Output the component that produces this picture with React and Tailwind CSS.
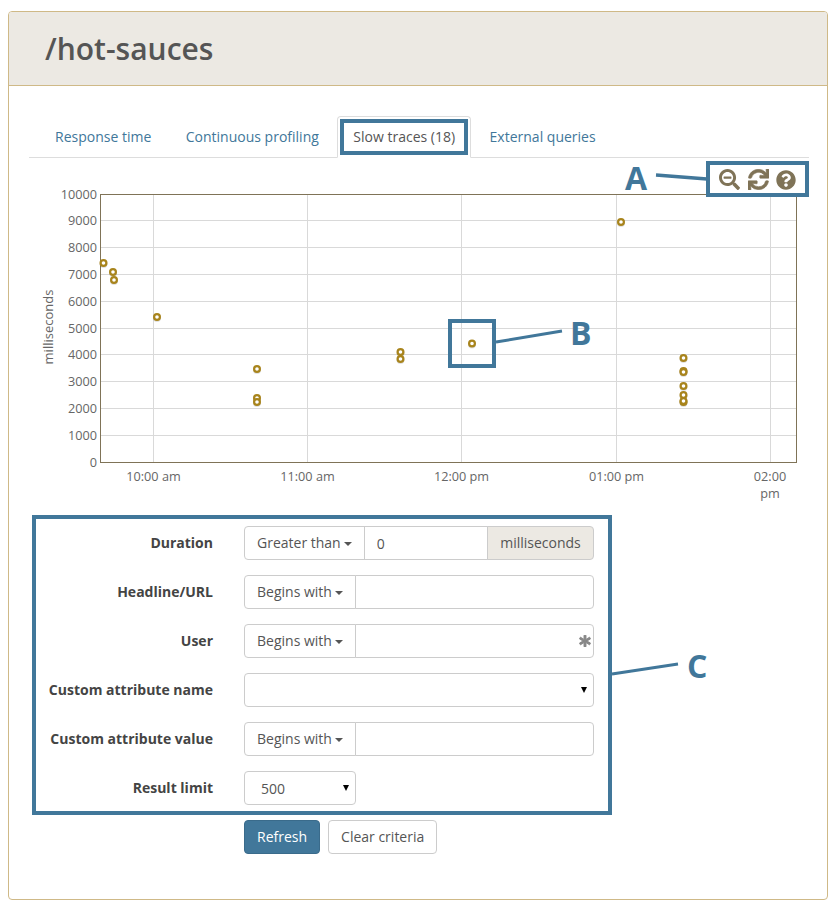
import React from "react";
import { FaSearchMinus, FaSync, FaQuestionCircle, FaAsterisk } from "react-icons/fa";

const yTicks = [10000, 9000, 8000, 7000, 6000, 5000, 4000, 3000, 2000, 1000, 0];
const xTicks = [
  { x: 153.5, label: "10:00 am" },
  { x: 307.5, label: "11:00 am" },
  { x: 461.5, label: "12:00 pm" },
  { x: 616.5, label: "01:00 pm" },
];
const points = [
  [103.5, 263], [113, 272], [114, 280], [157, 317], [257, 369], [257, 398], [257, 402],
  [400.5, 352], [400.5, 359], [472, 343.5], [621, 222], [683.5, 358], [683.5, 371],
  [683.5, 372], [683.5, 386], [683.5, 395], [683.5, 402], [683.5, 401],
];

function Chart() {
  return (
    <svg width="780" height="352" viewBox="29 158 780 352" className="block">
      {yTicks.map((tick) => {
        const y = Math.floor(462 - tick * 0.0268) + 0.5;
        return (
          <g key={tick}>
            <line x1="101" x2="797" y1={y} y2={y} stroke="#d9d9d9" />
            <text x="97" y={y + 4.5} textAnchor="end" fontSize="12.7" fill="#666">{tick}</text>
          </g>
        );
      })}
      {xTicks.map((tick) => (
        <g key={tick.label}>
          <line x1={tick.x} x2={tick.x} y1="194" y2="462" stroke="#d9d9d9" />
          <text x={tick.x} y="481" textAnchor="middle" fontSize="12.7" fill="#666">{tick.label}</text>
        </g>
      ))}
      <line x1="770.5" x2="770.5" y1="194" y2="462" stroke="#d9d9d9" />
      <text x="770" y="481" textAnchor="middle" fontSize="12.7" fill="#666">02:00</text>
      <text x="770" y="498" textAnchor="middle" fontSize="12.7" fill="#666">pm</text>
      <rect x="100.5" y="194.5" width="696" height="268" fill="none" stroke="#7f7357" />
      <text x="53" y="327" textAnchor="middle" fontSize="13" fill="#666" transform="rotate(-90 53 327)">milliseconds</text>
      {points.map(([x, y], i) => (
        <circle key={"s" + i} cx={x} cy={y + 1} r="3" fill="none" stroke="rgba(0,0,0,0.12)" strokeWidth="2" />
      ))}
      {points.map(([x, y], i) => (
        <circle key={i} cx={x} cy={y} r="2.9" fill="#fff" stroke="#a8841c" strokeWidth="2.2" />
      ))}
    </svg>
  );
}

function Caret() {
  return <span className="inline-block ml-[3px] align-middle border-x-[4px] border-x-transparent border-t-[4px] border-t-[#555]" />;
}

function FilterButton({ label }) {
  return (
    <button className="h-[34px] px-3 bg-white border border-[#ccc] rounded-l-[4px] text-sm text-[#555] whitespace-nowrap shrink-0">
      {label}
      <Caret />
    </button>
  );
}

function Row({ label, children }) {
  return (
    <div className="flex items-center">
      <label className="w-[184px] text-right text-sm font-bold text-[#444]">{label}</label>
      <div className="ml-[31px] w-[350px] flex">{children}</div>
    </div>
  );
}

function TextFilter({ label, asterisk }) {
  return (
    <>
      <FilterButton label={label} />
      <div className="relative flex-1 -ml-px">
        <input className="w-full h-[34px] px-3 bg-white border border-[#ccc] rounded-r-[4px] text-sm text-[#555] outline-none" />
        {asterisk && (
          <FaAsterisk className="absolute right-[3px] top-[11px] text-[#888]" size={12} stroke="currentColor" strokeWidth={40} />
        )}
      </div>
    </>
  );
}

function Select({ className, value }) {
  return (
    <div className={"relative " + className}>
      <select className="appearance-none w-full h-[34px] pl-4 pr-6 pt-[2px] bg-white border border-[#ccc] rounded-[4px] text-sm text-[#555]">
        <option>{value}</option>
      </select>
      <span className="absolute right-[7px] top-[14px] border-x-[3px] border-x-transparent border-t-[6px] border-t-black" />
    </div>
  );
}

function Tab({ children, active }) {
  if (active) {
    return (
      <li className="mr-[2.5px] -mb-px px-[15px] h-[42px] flex items-center border border-[#ddd] border-b-white rounded-t-[4px] bg-white text-sm text-[#555]">
        {children}
      </li>
    );
  }
  return <li className="mr-[2.5px] px-[16px] h-[41px] flex items-center text-sm text-[#41779a]">{children}</li>;
}

export default function App() {
  return (
    <div className="relative h-[909px] bg-white font-['Open_Sans',sans-serif] overflow-hidden">
      <div className="pt-[11px] px-2">
        <div className="h-[889px] border border-[#cfb987] rounded-[4px]">
          <div className="h-[74px] bg-[#ece9e3] border-b border-[#cfb987] rounded-t-[3px] pl-9 flex items-center">
            <h1 className="text-[30px] font-semibold text-[#555]">/hot-sauces</h1>
          </div>
          <div className="px-5 pt-[30px]">
            <ul className="flex pl-[10px] border-b border-[#ddd] w-[780px]">
              <Tab>Response time</Tab>
              <Tab>Continuous profiling</Tab>
              <Tab active>Slow traces (18)</Tab>
              <Tab>External queries</Tab>
            </ul>
            <Chart />
            <div className="mt-4 flex flex-col gap-[15px]">
              <Row label="Duration">
                <FilterButton label="Greater than" />
                <input
                  defaultValue="0"
                  className="-ml-px flex-1 min-w-0 h-[34px] px-3 bg-white border border-[#ccc] text-sm text-[#555] outline-none"
                />
                <span className="-ml-px w-[107px] h-[34px] flex items-center justify-center bg-[#ece9e3] border border-[#ccc] rounded-r-[4px] text-sm text-[#555]">
                  milliseconds
                </span>
              </Row>
              <Row label="Headline/URL">
                <TextFilter label="Begins with" />
              </Row>
              <Row label="User">
                <TextFilter label="Begins with" asterisk />
              </Row>
              <Row label="Custom attribute name">
                <Select className="w-full" value="" />
              </Row>
              <Row label="Custom attribute value">
                <TextFilter label="Begins with" />
              </Row>
              <Row label="Result limit">
                <Select className="w-[112px]" value="500" />
              </Row>
              <div className="ml-[215px] flex gap-2">
                <button className="h-[34px] px-3 bg-[#41779a] border border-[#3a6b8b] rounded-[4px] text-sm text-white">Refresh</button>
                <button className="h-[34px] px-3 bg-white border border-[#ccc] rounded-[4px] text-sm text-[#555]">Clear criteria</button>
              </div>
            </div>
          </div>
        </div>
      </div>

      {/* chart toolbar */}
      <div className="absolute left-[719px] top-[169px] flex items-center text-[#7f7357]">
        <FaSearchMinus size={21} />
        <FaSync size={21} className="ml-[8px]" stroke="currentColor" strokeWidth={15} />
        <FaQuestionCircle size={20} className="ml-[7px]" />
      </div>

      {/* callouts drawn on top of the screenshot */}
      <div className="absolute left-[340px] top-[119px] w-[128px] h-[36px] border-4 border-[#41779a]" />
      <div className="absolute left-[706px] top-[161px] w-[103px] h-[36px] border-4 border-[#41779a]" />
      <div className="absolute left-[448px] top-[319px] w-[48px] h-[49px] border-4 border-[#41779a]" />
      <div className="absolute left-[32px] top-[515px] w-[580px] h-[300px] border-4 border-[#41779a]" />
      <svg className="absolute left-0 top-0 pointer-events-none" width="836" height="909">
        <line x1="656" y1="175" x2="707" y2="179" stroke="#41779a" strokeWidth="3.5" />
        <line x1="496" y1="342" x2="562" y2="331" stroke="#41779a" strokeWidth="3" />
        <line x1="612" y1="674" x2="678" y2="664" stroke="#41779a" strokeWidth="3" />
      </svg>
      <span className="absolute left-[625px] top-[154px] text-[32px] font-bold text-[#41779a]">A</span>
      <span className="absolute left-[570px] top-[309px] text-[32px] font-bold text-[#41779a]">B</span>
      <span className="absolute left-[687px] top-[642px] text-[32px] font-bold text-[#41779a]">C</span>
    </div>
  );
}
